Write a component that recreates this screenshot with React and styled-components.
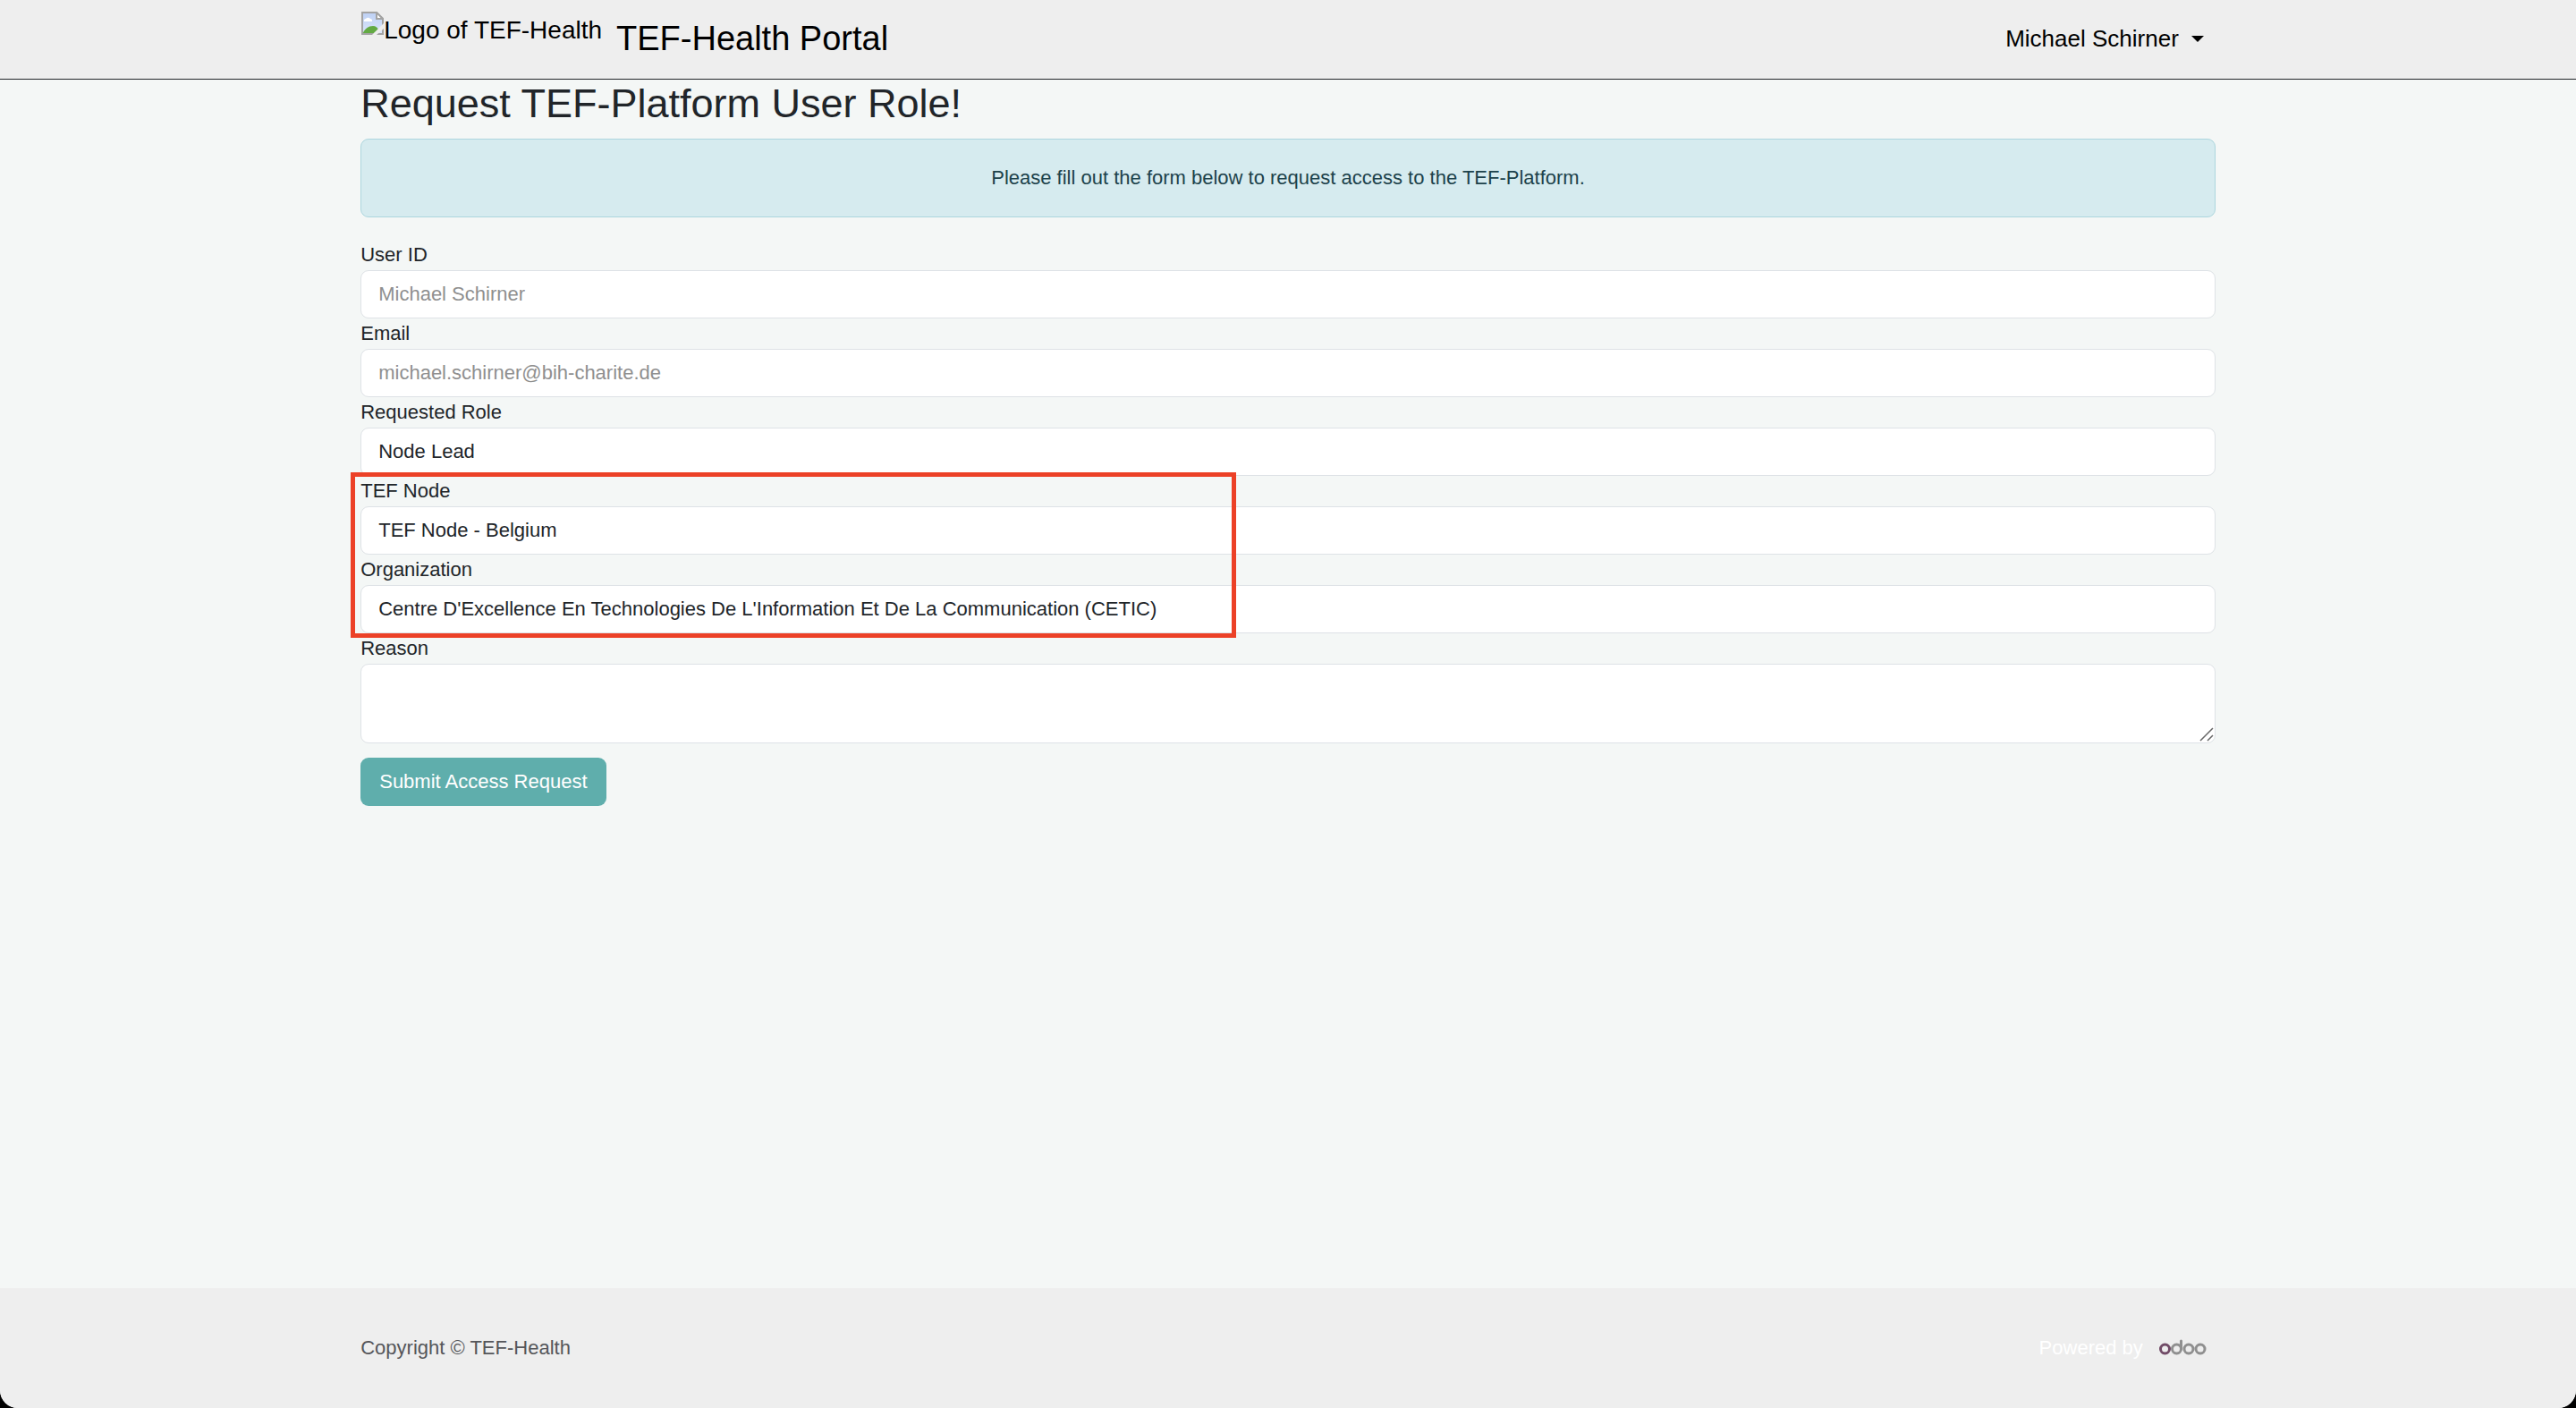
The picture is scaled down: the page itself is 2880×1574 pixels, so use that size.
import React from 'react';
import styled, { createGlobalStyle } from 'styled-components';

const GlobalStyle = createGlobalStyle`
  *, *::before, *::after { box-sizing: border-box; }
  html { background: #000; }
  body {
    margin: 0;
    font-family: "Liberation Sans", Arial, Helvetica, sans-serif;
    font-size: 22px;
    line-height: 34px;
    color: #212529;
  }
`;

const Page = styled.div`
  display: flex;
  flex-direction: column;
  min-height: 100vh;
  overflow: hidden;
  background: #f4f7f6;
  border-radius: 0 0 20px 20px;
`;

const Container = styled.div`
  width: 72%;
  margin: 0 auto;
`;

const Header = styled.header`
  background: #eeeeee;
  border-bottom: 1px solid #212529;
`;

const HeaderBar = styled(Container)`
  display: flex;
  align-items: flex-start;
  justify-content: space-between;
  padding: 13px 0 15px;
`;

const Brand = styled.a`
  display: flex;
  align-items: flex-start;
  color: #000;
  text-decoration: none;
`;

const BrandLogo = styled.span`
  display: flex;
  align-items: flex-start;
  margin-right: 16px;
  font-size: 28px;
  line-height: 42px;

  svg { flex: none; }
`;

const BrandName = styled.span`
  font-size: 38px;
  line-height: 60px;
`;

const UserMenu = styled.button`
  display: flex;
  align-items: center;
  gap: 14px;
  padding: 0 13px 0 0;
  border: 0;
  background: none;
  color: #000;
  font: inherit;
  font-size: 26px;
  line-height: 60px;
`;

const Caret = styled.span`
  border: 7px solid transparent;
  border-top-color: #000;
  border-bottom: 0;
`;

const Main = styled(Container).attrs({ as: 'main' })`
  flex: 1;
`;

const Title = styled.h1`
  margin: 0 0 12px;
  font-size: 45px;
  font-weight: 400;
  line-height: 54px;
`;

const Alert = styled.div`
  margin-bottom: 25px;
  padding: 26px;
  border: 1px solid #acd6de;
  border-radius: 9px;
  background: #d6ebef;
  color: #1c424b;
  text-align: center;
`;

const Form = styled.form`
  display: flex;
  flex-direction: column;
`;

const Highlighted = styled.div`
  position: relative;
`;

const Marker = styled.div`
  position: absolute;
  inset: -4px auto -5px -11px;
  width: 990px;
  border: 5px solid #ec4127;
  pointer-events: none;
`;

const Field = styled.div`
  display: flex;
  flex-direction: column;
`;

const controlStyle = `
  width: 100%;
  height: 54px;
  margin: 0;
  padding: 0 19px;
  border: 1px solid #dee2e6;
  border-radius: 9px;
  background: #fff;
  color: #212529;
  font: inherit;
  outline: none;
`;

const Input = styled.input`
  ${controlStyle}
  &:disabled { color: #8f8f8f; }
`;

const Select = styled.select`
  ${controlStyle}
  appearance: none;
`;

const ReasonBox = styled.div`
  position: relative;
  display: flex;
`;

const TextArea = styled.textarea`
  ${controlStyle}
  height: 89px;
  padding: 10px 19px;
  resize: none;
`;

const Grip = styled.svg`
  position: absolute;
  right: 2px;
  bottom: 2px;
`;

const Submit = styled.button`
  align-self: flex-start;
  margin-top: 16px;
  padding: 10px 21px;
  border: 0;
  border-radius: 9px;
  background: #5faeac;
  color: #fff;
  font: inherit;
`;

const Footer = styled.footer`
  background: #eeeeee;
`;

const FooterBar = styled(Container)`
  display: flex;
  align-items: center;
  justify-content: space-between;
  padding: 50px 0;
  color: #55565a;
`;

const Powered = styled.div`
  display: flex;
  align-items: center;
  gap: 18px;
  padding-right: 10px;
  color: #fff;

  a { display: flex; }
`;

function BrokenImage() {
  return (
    <svg width="26" height="26" viewBox="0 0 26 26" aria-hidden="true">
      <defs>
        <linearGradient id="sky" x1="0" y1="0" x2="0" y2="1">
          <stop offset="0" stopColor="#bdd0f4" />
          <stop offset="1" stopColor="#dbe6fa" />
        </linearGradient>
      </defs>
      <path d="M2 1H18L25 8V25H2Z" fill="url(#sky)" />
      <path d="M4 11a2.500 2.500 0 0 1 2-3a3 3 0 0 1 5 0a2.500 2.500 0 0 1 2 3Z" fill="#fff" />
      <path d="M2 25C5 19 9 16 14 16C17 16 19 18 20 20L14 25Z" fill="#63aa43" />
      <path d="M2 25V1H18L25 8V25Z" fill="none" stroke="#a3a3a3" strokeWidth="2" />
      <path d="M18 1V8H25Z" fill="#fff" stroke="#a3a3a3" strokeWidth="2" />
      <path d="M13 26L26 13V19L18 26Z" fill="#eee" />
    </svg>
  );
}

function OdooLogo() {
  return (
    <svg width="53" height="20" viewBox="0 0 53 20" role="img" aria-label="Odoo" fill="none" strokeWidth="3">
      <g stroke="#8f8f8f">
        <circle cx="19.500" cy="11" r="5" />
        <path d="M24.500 2V11" strokeLinecap="round" />
        <circle cx="33" cy="11" r="5" />
        <circle cx="46" cy="11" r="5" />
      </g>
      <circle cx="6.500" cy="11" r="5" stroke="#714b67" />
    </svg>
  );
}

function SelectField({ id, label, value }) {
  return (
    <Field>
      <label htmlFor={id}>{label}</label>
      <Select id={id} defaultValue={value}>
        <option>{value}</option>
      </Select>
    </Field>
  );
}

function InputField({ id, label, value }) {
  return (
    <Field>
      <label htmlFor={id}>{label}</label>
      <Input id={id} defaultValue={value} disabled />
    </Field>
  );
}

export default function App() {
  return (
    <>
      <GlobalStyle />
      <Page>
        <Header>
          <HeaderBar>
            <Brand href="#">
              <BrandLogo>
                <BrokenImage />
                Logo of TEF-Health
              </BrandLogo>
              <BrandName>TEF-Health Portal</BrandName>
            </Brand>
            <UserMenu type="button">
              Michael Schirner
              <Caret />
            </UserMenu>
          </HeaderBar>
        </Header>
        <Main>
          <Title>Request TEF-Platform User Role!</Title>
          <Alert>Please fill out the form below to request access to the TEF-Platform.</Alert>
          <Form>
            <InputField id="user" label="User ID" value="Michael Schirner" />
            <InputField id="email" label="Email" value="michael.schirner@bih-charite.de" />
            <SelectField id="role" label="Requested Role" value="Node Lead" />
            <Highlighted>
              <SelectField id="node" label="TEF Node" value="TEF Node - Belgium" />
              <SelectField
                id="organization"
                label="Organization"
                value="Centre D'Excellence En Technologies De L'Information Et De La Communication (CETIC)"
              />
              <Marker />
            </Highlighted>
            <Field>
              <label htmlFor="reason">Reason</label>
              <ReasonBox>
                <TextArea id="reason" />
                <Grip width="16" height="16" viewBox="0 0 16 16" stroke="#666" strokeWidth="1.500" aria-hidden="true">
                  <path d="M1 15L15 1M9 15L15 9" />
                </Grip>
              </ReasonBox>
            </Field>
            <Submit type="button">Submit Access Request</Submit>
          </Form>
        </Main>
        <Footer>
          <FooterBar>
            <span>Copyright © TEF-Health</span>
            <Powered>
              Powered by
              <a href="#"><OdooLogo /></a>
            </Powered>
          </FooterBar>
        </Footer>
      </Page>
    </>
  );
}
